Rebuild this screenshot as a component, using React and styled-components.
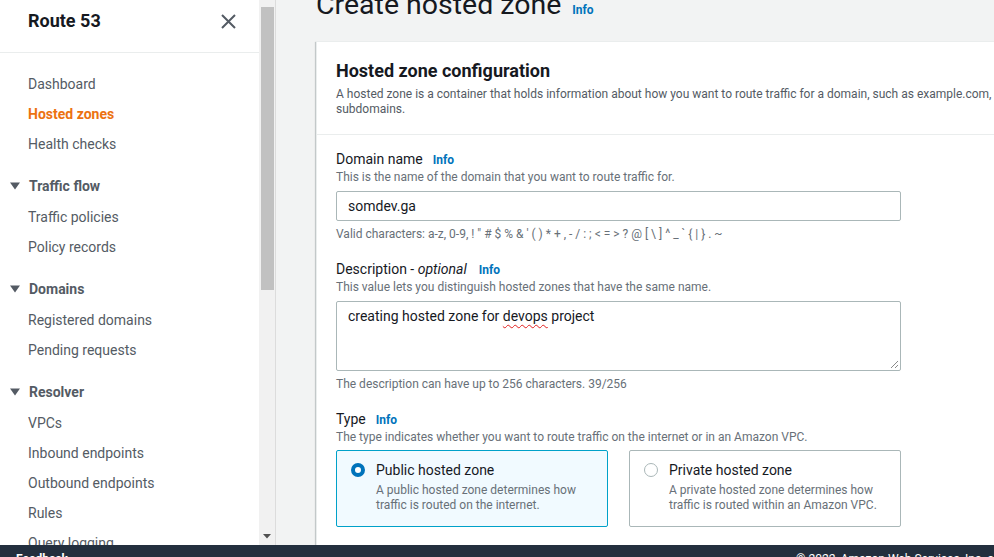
import React from "react";
import styled, { createGlobalStyle } from "styled-components";

const Global = createGlobalStyle`
  html, body { margin: 0; padding: 0; }
  body {
    font-family: Roboto, "Noto Sans", "Liberation Sans", sans-serif;
    color: #16191f;
    background: #f2f3f3;
    overflow: hidden;
  }
  * { box-sizing: border-box; }
`;

const Page = styled.div`
  display: flex;
  flex-direction: column;
  height: 557px;
  overflow: hidden;
`;

const Body = styled.div`
  display: flex;
  flex: none;
  height: 545px;
  overflow: hidden;
`;

const Sidebar = styled.nav`
  width: 259px;
  flex: none;
  background: #fff;
  overflow: hidden;
`;

const SideHeader = styled.div`
  display: flex;
  align-items: center;
  justify-content: space-between;
  height: 53px;
  padding: 0 23px 10px 28px;
  border-bottom: 1px solid #eaeded;
`;

const SideTitle = styled.h2`
  margin: 0;
  font-size: 18px;
  font-weight: 700;
  line-height: 22px;
  color: #16191f;
`;

const CloseBtn = styled.button`
  display: flex;
  padding: 0;
  border: 0;
  background: none;
  cursor: pointer;
`;

const NavList = styled.div`
  padding-top: 16px;
`;

const NavGroup = styled.div`
  margin-bottom: 12px;
`;

const NavItem = styled.a`
  display: block;
  padding-left: 28px;
  font-size: 14px;
  line-height: 30px;
  height: 30px;
  color: ${(p) => (p.$active ? "#ec7211" : "#545b64")};
  font-weight: ${(p) => (p.$active ? 700 : 400)};
  text-decoration: none;
  white-space: nowrap;
`;

const GroupHeader = styled.div`
  display: flex;
  align-items: center;
  gap: 9px;
  height: 30px;
  margin-bottom: 1px;
  padding-left: 10px;
  font-size: 14px;
  font-weight: 700;
  color: #545b64;
`;

const ScrollTrack = styled.div`
  width: 17px;
  flex: none;
  background: #f1f1f1;
  display: flex;
  flex-direction: column;
  align-items: center;
  padding-top: 7px;
  padding-bottom: 6px;
  border-right: 1px solid #dcdcdc;
`;

const ScrollThumb = styled.div`
  width: 13px;
  height: 283px;
  background: #c1c1c1;
`;

const ScrollArrow = styled.div`
  margin-top: auto;
  display: flex;
`;

const Main = styled.main`
  flex: 1;
  min-width: 0;
  background: #f2f3f3;
  padding-left: 40px;
  overflow: hidden;
`;

const TitleRow = styled.div`
  display: flex;
  align-items: baseline;
  gap: 11px;
  margin-top: -13px;
  height: 36px;
  white-space: nowrap;
`;

const PageTitle = styled.h1`
  margin: 0;
  font-size: 28.5px;
  line-height: 36px;
  font-weight: 400;
  color: #16191f;
`;

const InfoLink = styled.a`
  font-size: 12px;
  font-weight: 700;
  color: #0073bb;
  text-decoration: none;
  margin-left: ${(p) => p.$ml || "0"};
`;

const Card = styled.section`
  margin-top: 18px;
  width: 800px;
  background: #fff;
  border-top: 1px solid #eaeded;
  border-left: 1px solid #eaeded;
  box-shadow: 0 1px 1px 0 rgba(0, 28, 36, 0.3), 1px 1px 1px 0 rgba(0, 28, 36, 0.15),
    -1px 1px 1px 0 rgba(0, 28, 36, 0.15);
`;

const CardHeader = styled.header`
  padding: 18px 20px 17px 19px;
  border-bottom: 1px solid #eaeded;
`;

const CardTitle = styled.h2`
  margin: 0 0 5px;
  font-size: 18px;
  line-height: 22px;
  font-weight: 700;
  color: #16191f;
`;

const CardDesc = styled.p`
  margin: 0;
  font-size: 12px;
  line-height: 15px;
  color: #545b64;
`;

const CardBody = styled.div`
  padding: 16px 20px 20px 19px;
  display: flex;
  flex-direction: column;
`;

const Field = styled.div`
  display: flex;
  flex-direction: column;
  margin-bottom: ${(p) => p.$mb || "19px"};
`;

const Label = styled.label`
  font-size: 14px;
  line-height: 17px;
  color: #16191f;
  display: flex;
  align-items: baseline;
  em { font-style: italic; }
`;

const Hint = styled.div`
  font-size: 12px;
  line-height: 16px;
  color: #687078;
  margin-top: ${(p) => p.$mt || "0"};
  white-space: nowrap;
`;

const InputBox = styled.div`
  margin-top: 6px;
  width: 565px;
  height: 30px;
  border: 1px solid #aab7b8;
  border-radius: 2px;
  background: #fff;
  padding: 0 11px;
  font-size: 14px;
  line-height: 28px;
  color: #16191f;
`;

const TextBox = styled.div`
  position: relative;
  margin-top: 6px;
  width: 565px;
  height: 70px;
  border: 1px solid #aab7b8;
  border-radius: 2px;
  background: #fff;
  padding: 4px 11px;
  font-size: 14px;
  line-height: 20px;
  color: #16191f;
`;

const Misspelled = styled.span`
  text-decoration: underline wavy #e0201f;
  text-decoration-thickness: 1px;
  text-underline-offset: 3px;
`;

const Grip = styled.svg`
  position: absolute;
  right: 1px;
  bottom: 1px;
`;

const RadioRow = styled.div`
  display: flex;
  gap: 21px;
  margin-top: 5px;
`;

const RadioCard = styled.label`
  width: 272px;
  height: 77px;
  display: flex;
  gap: 11px;
  padding: 9px 14px 0 14px;
  border: 1px solid ${(p) => (p.$checked ? "#00a1c9" : "#aab7b8")};
  background: ${(p) => (p.$checked ? "#f1faff" : "#fff")};
  border-radius: 2px;
`;

const RadioDot = styled.span`
  flex: none;
  width: 14px;
  height: 14px;
  margin-top: 3px;
  border-radius: 50%;
  background: #fff;
  border: ${(p) => (p.$checked ? "4px solid #0073bb" : "1px solid #aab7b8")};
`;

const RadioText = styled.div`
  display: flex;
  flex-direction: column;
`;

const RadioTitle = styled.div`
  font-size: 14px;
  line-height: 20px;
  color: #16191f;
  margin-bottom: 3px;
`;

const RadioDesc = styled.div`
  font-size: 12px;
  line-height: 15px;
  color: #687078;
`;

const Footer = styled.footer`
  flex: none;
  height: 40px;
  background: #232f3e;
  color: #fff;
  display: grid;
  grid-template-columns: 780px auto;
  padding: 6px 0 0 16px;
  font-size: 12px;
  line-height: 16px;
  white-space: nowrap;
`;

const FooterLink = styled.span`
  font-weight: 700;
`;

const Triangle = () => (
  <svg width="10" height="8" viewBox="0 0 10 8">
    <path d="M0 0.5 H10 L5 7.5 Z" fill="#545b64" />
  </svg>
);

const groups = [
  {
    header: null,
    items: ["Dashboard", "Hosted zones", "Health checks"],
  },
  { header: "Traffic flow", items: ["Traffic policies", "Policy records"] },
  { header: "Domains", items: ["Registered domains", "Pending requests"] },
  {
    header: "Resolver",
    items: ["VPCs", "Inbound endpoints", "Outbound endpoints", "Rules", "Query logging"],
  },
];

export default function App() {
  return (
    <>
      <Global />
      <Page>
        <Body>
          <Sidebar>
            <SideHeader>
              <SideTitle>Route 53</SideTitle>
              <CloseBtn aria-label="Close">
                <svg width="15" height="15" viewBox="0 0 15 15">
                  <path d="M1 1 L14 14 M14 1 L1 14" stroke="#545b64" strokeWidth="2" />
                </svg>
              </CloseBtn>
            </SideHeader>
            <NavList>
              {groups.map((g, i) => (
                <NavGroup key={i}>
                  {g.header && (
                    <GroupHeader>
                      <Triangle />
                      {g.header}
                    </GroupHeader>
                  )}
                  {g.items.map((it) => (
                    <NavItem key={it} href="#" $active={it === "Hosted zones"}>
                      {it}
                    </NavItem>
                  ))}
                </NavGroup>
              ))}
            </NavList>
          </Sidebar>
          <ScrollTrack>
            <ScrollThumb />
            <ScrollArrow>
              <svg width="8" height="5" viewBox="0 0 8 5">
                <path d="M0 0 H8 L4 4.5 Z" fill="#505050" />
              </svg>
            </ScrollArrow>
          </ScrollTrack>
          <Main>
            <TitleRow>
              <PageTitle>Create hosted zone</PageTitle>
              <InfoLink href="#">Info</InfoLink>
            </TitleRow>
            <Card>
              <CardHeader>
                <CardTitle>Hosted zone configuration</CardTitle>
                <CardDesc>
                  A hosted zone is a container that holds information about how you want to
                  route traffic for a domain, such as example.com, and its subdomains.
                </CardDesc>
              </CardHeader>
              <CardBody>
                <Field>
                  <Label>
                    Domain name<InfoLink href="#" $ml="10px">Info</InfoLink>
                  </Label>
                  <Hint>This is the name of the domain that you want to route traffic for.</Hint>
                  <InputBox>somdev.ga</InputBox>
                  <Hint $mt="5px">
                    Valid characters: a-z, 0-9, ! " # $ % &amp; ' ( ) * + , - / : ; &lt; = &gt; ? @ [ \ ] ^ _ ` {"{"} | {"}"} . ~
                  </Hint>
                </Field>
                <Field>
                  <Label>
                    Description -&nbsp;<em>optional</em>
                    <InfoLink href="#" $ml="12px">Info</InfoLink>
                  </Label>
                  <Hint>This value lets you distinguish hosted zones that have the same name.</Hint>
                  <TextBox>
                    creating hosted zone for <Misspelled>devops</Misspelled> project
                    <Grip width="9" height="9" viewBox="0 0 9 9">
                      <path d="M8 1 L1 8 M8 5 L5 8" stroke="#8a8a8a" strokeWidth="1" />
                    </Grip>
                  </TextBox>
                  <Hint $mt="5px">The description can have up to 256 characters. 39/256</Hint>
                </Field>
                <Field $mb="0">
                  <Label>
                    Type<InfoLink href="#" $ml="10px">Info</InfoLink>
                  </Label>
                  <Hint>
                    The type indicates whether you want to route traffic on the internet or in an
                    Amazon VPC.
                  </Hint>
                  <RadioRow>
                    <RadioCard $checked>
                      <RadioDot $checked />
                      <RadioText>
                        <RadioTitle>Public hosted zone</RadioTitle>
                        <RadioDesc>
                          A public hosted zone determines how
                          <br />
                          traffic is routed on the internet.
                        </RadioDesc>
                      </RadioText>
                    </RadioCard>
                    <RadioCard>
                      <RadioDot />
                      <RadioText>
                        <RadioTitle>Private hosted zone</RadioTitle>
                        <RadioDesc>
                          A private hosted zone determines how
                          <br />
                          traffic is routed within an Amazon VPC.
                        </RadioDesc>
                      </RadioText>
                    </RadioCard>
                  </RadioRow>
                </Field>
              </CardBody>
            </Card>
          </Main>
        </Body>
        <Footer>
          <FooterLink>Feedback</FooterLink>
          <span>© 2022, Amazon Web Services, Inc. or its affiliates.</span>
        </Footer>
      </Page>
    </>
  );
}
